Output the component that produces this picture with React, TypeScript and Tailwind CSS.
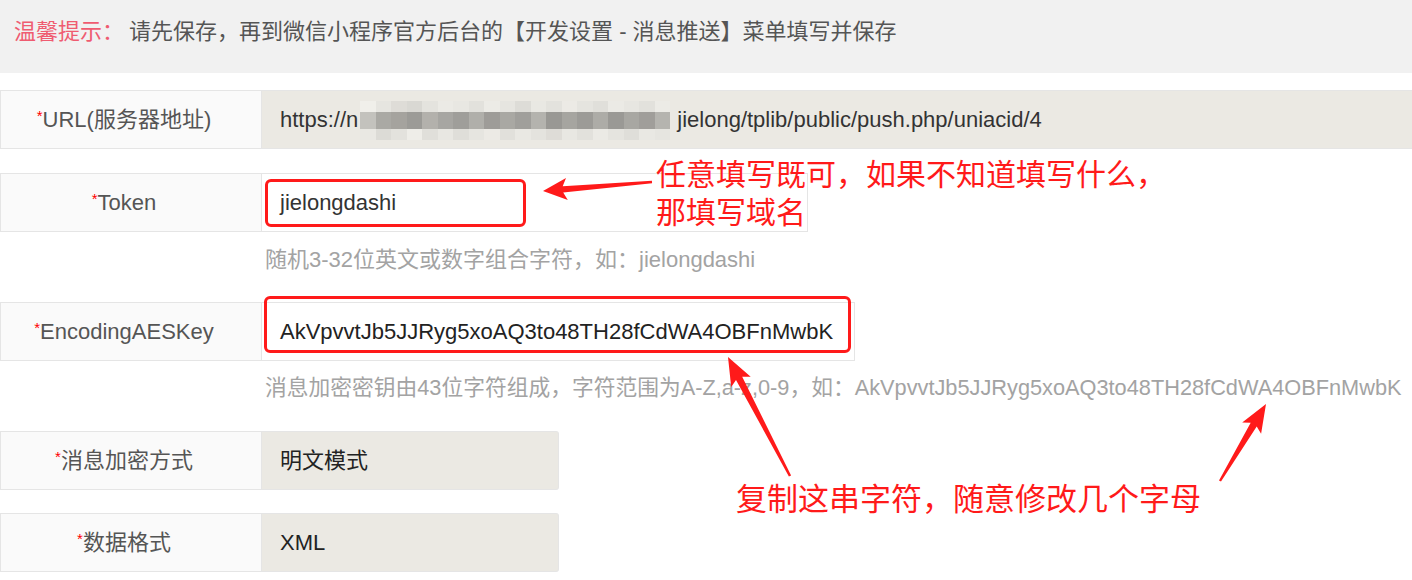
import React from "react";

type P = [number, number];

function arrowPoints(tail: P, tip: P, headLen: number, headHalf: number, shaftTip: number, shaftTail: number): string {
  const dx = tip[0] - tail[0];
  const dy = tip[1] - tail[1];
  const len = Math.hypot(dx, dy);
  const ux = dx / len;
  const uy = dy / len;
  const nx = -uy;
  const ny = ux;
  const bx = tip[0] - ux * headLen;
  const by = tip[1] - uy * headLen;
  const wx = bx - ux * 4;
  const wy = by - uy * 4;
  const pts: P[] = [
    [tail[0] + nx * shaftTail, tail[1] + ny * shaftTail],
    [bx + nx * shaftTip, by + ny * shaftTip],
    [wx + nx * headHalf, wy + ny * headHalf],
    [tip[0], tip[1]],
    [wx - nx * headHalf, wy - ny * headHalf],
    [bx - nx * shaftTip, by - ny * shaftTip],
    [tail[0] - nx * shaftTail, tail[1] - ny * shaftTail],
  ];
  return pts.map((p) => `${p[0].toFixed(1)},${p[1].toFixed(1)}`).join(" ");
}

const FONT = { fontFamily: '"Liberation Sans", Arial, "Noto Sans CJK SC", sans-serif' };

const topRow = ["#f0efea", "#e6e5e0", "#dedcd7", "#d9d8d3", "#e4e3de", "#ebeae5", "#e8e7e2", "#e2e1dc", "#ecebe6", "#e6e5e0", "#dddcd7", "#e9e8e3", "#e3e2dd", "#eceae5", "#e5e4df", "#e0dfda", "#ebeae5", "#e7e6e1", "#e2e1dc", "#ecebe6"];
const midRow = ["#c3c2bd", "#aaa9a4", "#a5a39e", "#9c9b97", "#b3b1ac", "#a7a6a2", "#9f9e9a", "#b0afaa", "#9e9c98", "#a9a8a3", "#a09f9b", "#b4b3ae", "#999894", "#a6a5a0", "#9c9b97", "#adaca7", "#9a9995", "#a8a7a2", "#a09e9a", "#b5b4af"];
const botRow = ["#e9e8e3", "#dcdbd6", "#e3e2dd", "#eeede8", "#e0dfda", "#e8e7e2", "#dfded9", "#e6e5e0", "#eceae5", "#e1e0db", "#e9e8e3", "#e4e3de", "#dedcd7", "#e8e7e2", "#e2e1dc", "#ebeae5", "#e5e4df", "#dfded9", "#e9e8e3", "#e6e5e0"];

function Mosaic() {
  return (
    <span className="inline-flex flex-col align-middle mx-[2px] relative top-[1px]">
      <span className="flex">
        {topRow.map((c, i) => (
          <span key={i} className="block w-[15.5px] h-[11px]" style={{ backgroundColor: c }} />
        ))}
      </span>
      <span className="flex">
        {midRow.map((c, i) => (
          <span key={i} className="block w-[15.5px] h-[17px]" style={{ backgroundColor: c }} />
        ))}
      </span>
      <span className="flex">
        {botRow.map((c, i) => (
          <span key={i} className="block w-[15.5px] h-[11px]" style={{ backgroundColor: c }} />
        ))}
      </span>
    </span>
  );
}

function Label({ text }: { text: string }) {
  return (
    <div className="w-[262px] shrink-0 border border-[#e5e5e5] bg-[#fafafa] flex items-center justify-center pr-[14px] text-[22px] leading-[28px] text-[#555]">
      <span className="text-[#f00] text-[15px] relative -top-[4px]">*</span>
      <span>{text}</span>
    </div>
  );
}

export default function App() {
  return (
    <div className="relative w-[1412px] h-[580px] bg-white overflow-hidden" style={FONT}>
      {/* banner */}
      <div className="h-[73px] bg-[#f1f1f1] pl-[14px] pt-[18px] text-[22px] leading-[28px] flex">
        <span className="text-[#ef5b70]">温馨提示：</span>
        <span className="ml-[5px] text-[#555]">请先保存，再到微信小程序官方后台的【开发设置 - 消息推送】菜单填写并保存</span>
      </div>

      <div className="pt-[17px]">
        {/* URL */}
        <div className="flex h-[59px]">
          <Label text="URL(服务器地址)" />
          <div className="flex-1 bg-[#ebe9e3] border-y border-[#e5e5e5] flex items-center pl-[18px] text-[22px] leading-[28px] text-[#333] whitespace-nowrap">
            <span>https://n</span>
            <Mosaic />
            <span className="ml-[5px]">jielong/tplib/public/push.php/uniacid/4</span>
          </div>
        </div>

        {/* Token */}
        <div className="flex h-[59px] mt-[24px]">
          <Label text="Token" />
          <div className="w-[546px] bg-white border-y border-r border-[#e5e5e5] flex items-center pl-[18px] text-[22px] leading-[28px] text-[#333]">
            jielongdashi
          </div>
        </div>
        <div className="pl-[265px] mt-[14px] mb-[28px] text-[22px] leading-[28px] text-[#a3a3a3]">
          随机3-32位英文或数字组合字符，如：jielongdashi
        </div>

        {/* AES */}
        <div className="flex h-[59px]">
          <Label text="EncodingAESKey" />
          <div className="w-[593px] bg-white border-y border-r border-[#e5e5e5] flex items-center pl-[18px] text-[22px] leading-[28px] text-[#222]">
            AkVpvvtJb5JJRyg5xoAQ3to48TH28fCdWA4OBFnMwbK
          </div>
        </div>
        <div className="pl-[265px] mt-[13px] mb-[29px] text-[21.75px] leading-[28px] text-[#a3a3a3] whitespace-nowrap">
          消息加密密钥由43位字符组成，字符范围为A-Z,a-z,0-9，如：AkVpvvtJb5JJRyg5xoAQ3to48TH28fCdWA4OBFnMwbK
        </div>

        {/* mode */}
        <div className="flex h-[59px]">
          <Label text="消息加密方式" />
          <div className="w-[297px] bg-[#ebe9e3] border-y border-r border-[#e5e5e5] rounded-r-[3px] flex items-center pl-[18px] text-[22px] leading-[28px] text-[#222]">
            明文模式
          </div>
        </div>

        {/* format */}
        <div className="flex h-[59px] mt-[23px]">
          <Label text="数据格式" />
          <div className="w-[297px] bg-[#ebe9e3] border-y border-r border-[#e5e5e5] rounded-r-[3px] flex items-center pl-[18px] text-[22px] leading-[28px] text-[#222]">
            XML
          </div>
        </div>
      </div>

      {/* annotations */}
      <div className="absolute left-[265px] top-[179px] w-[261px] h-[48px] border-[3px] border-[#ff1a1a] rounded-[6px]" />
      <div className="absolute left-[264px] top-[296px] w-[587px] h-[57px] border-[3px] border-[#ff1a1a] rounded-[6px]" />

      <div className="absolute left-[656px] top-[156px] text-[30px] leading-[38px] text-[#ff1a1a] whitespace-nowrap">
        <div>任意填写既可，如果不知道填写什么，</div>
        <div>那填写域名</div>
      </div>
      <div className="absolute left-[736px] top-[481px] text-[31px] leading-[38px] text-[#ff1a1a] whitespace-nowrap">
        复制这串字符，随意修改几个字母
      </div>

      <svg className="absolute left-0 top-0" width="1412" height="580" viewBox="0 0 1412 580">
        <polygon points={arrowPoints([652, 182], [543, 191], 20, 11, 3.2, 1.2)} fill="#ff1a1a" />
        <polygon points={arrowPoints([790, 476], [728, 357], 24, 11, 3.5, 1.2)} fill="#ff1a1a" />
        <polygon points={arrowPoints([1220, 481], [1266, 404], 24, 11, 3.5, 1.2)} fill="#ff1a1a" />
      </svg>
    </div>
  );
}
